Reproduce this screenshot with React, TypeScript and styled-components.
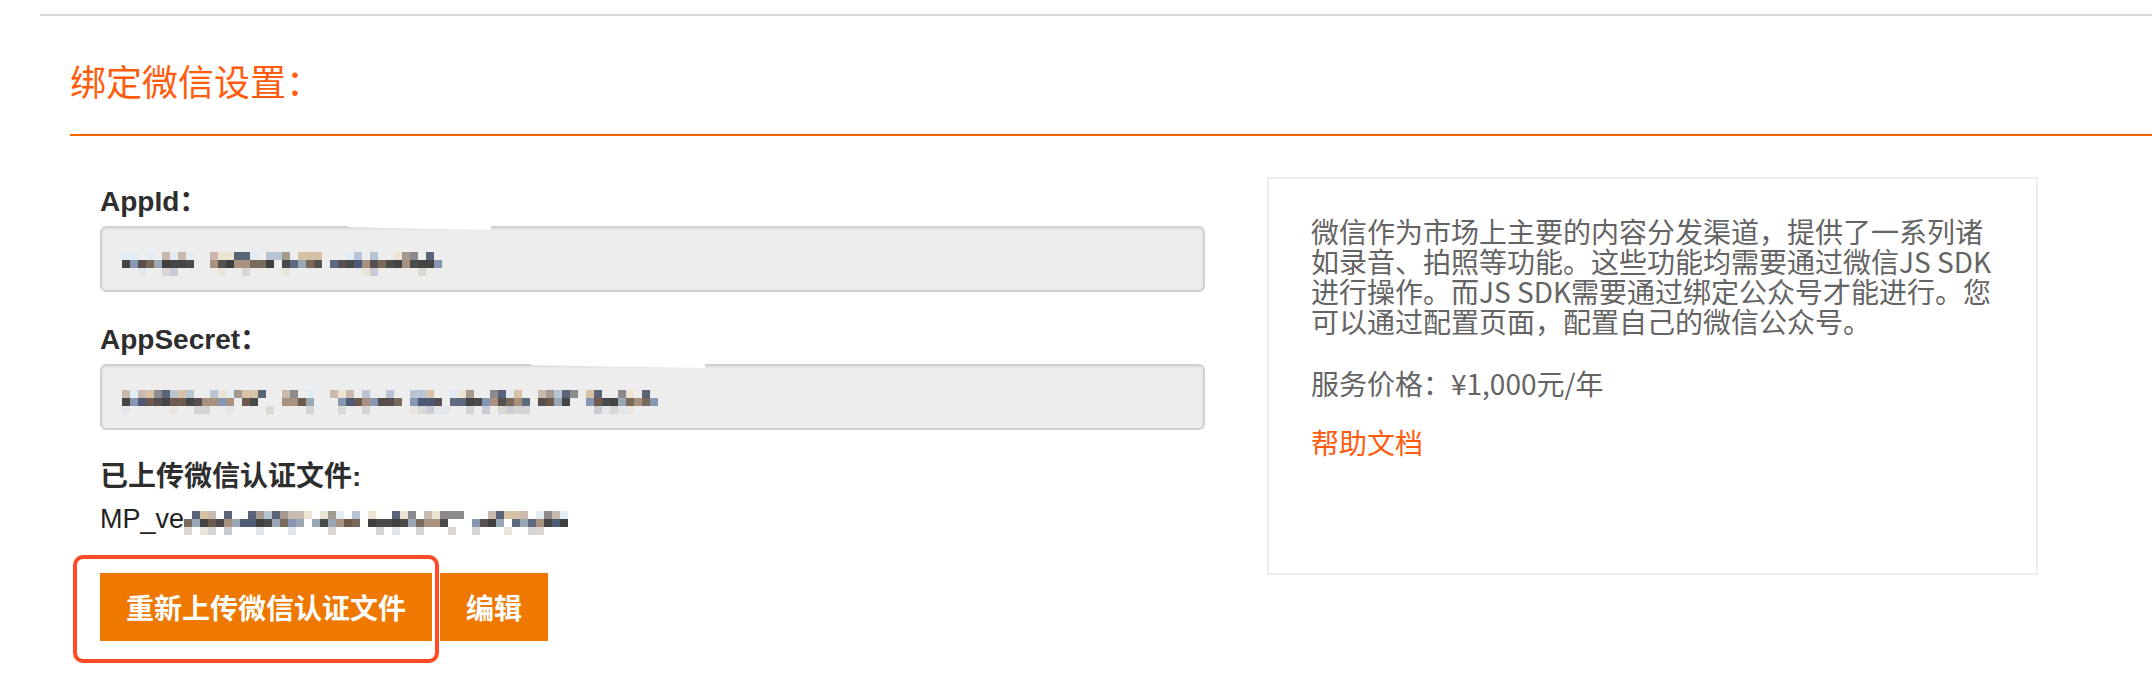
import * as React from "react";
import styled, { createGlobalStyle } from "styled-components";

const GlobalStyle = createGlobalStyle`
  html, body {
    margin: 0;
    padding: 0;
    background: #fff;
  }
  body {
    font-family: "Noto Sans CJK SC", "Liberation Sans", sans-serif;
    color: #333;
  }
`;

const Page = styled.div`
  min-height: 700px;
  box-sizing: border-box;
  padding: 14px 0 0 40px;
`;

const TopRule = styled.div`
  height: 2px;
  background: #d9d9d9;
`;

const Section = styled.section`
  margin-left: 30px;
`;

const Heading = styled.h2`
  margin: 0;
  padding: 42px 0 32px;
  border-bottom: 2px solid #ff6300;
  font-size: 36px;
  line-height: 44px;
  font-weight: 400;
  color: #ff5c0e;
`;

const Body = styled.div`
  display: flex;
  align-items: flex-start;
  gap: 62px;
  padding-left: 30px;
  margin-top: 41px;
`;

const Form = styled.div`
  width: 1105px;
  padding-top: 7px;
`;

const Label = styled.div<{ $top?: number }>`
  margin: ${(p) => p.$top ?? 0}px 0 6px;
  font-family: "Liberation Sans", "Noto Sans CJK SC", sans-serif;
  font-size: 28px;
  line-height: 36px;
  font-weight: 700;
  color: #2e2e2e;
`;

const Field = styled.div`
  position: relative;
  box-sizing: border-box;
  height: 66px;
  padding: 24px 0 0 20px;
  background: #ededed;
  border: 2px solid #d0d0d0;
  border-radius: 6px;
  box-shadow: inset 0 1px 3px rgba(0, 0, 0, 0.08);
`;

// white wedge left over the top border by the screenshot's masking
const Smudge = styled.span<{ $left: number; $width: number }>`
  position: absolute;
  top: -3px;
  left: ${(p) => p.$left}px;
  width: ${(p) => p.$width}px;
  height: 5px;
  background: #fff;
  clip-path: polygon(0 0, 100% 0, 100% 100%, 0 45%);
`;

const Mosaic = styled.div<{ $cols: number }>`
  display: grid;
  grid-template-columns: repeat(${(p) => p.$cols}, 8px);
  grid-auto-rows: 8px;
`;

const Cell = styled.span<{ $c: string }>`
  background: ${(p) => p.$c};
`;

const FileLine = styled.div`
  display: flex;
  align-items: flex-start;
  height: 36px;
  margin-top: 5px;
`;

const FileName = styled.span`
  font-family: "Liberation Sans", sans-serif;
  font-size: 27px;
  line-height: 36px;
  color: #222;
`;

const FileMosaic = styled.div`
  margin-top: 10px;
`;

const ButtonRow = styled.div`
  position: relative;
  display: flex;
  gap: 8px;
  margin-top: 36px;
`;

const Button = styled.button`
  height: 68px;
  padding: 0 26px;
  border: none;
  background: #ef7800;
  color: #fff;
  font-family: "Noto Sans CJK SC", sans-serif;
  font-size: 28px;
  line-height: 68px;
  font-weight: 700;
  cursor: pointer;
`;

const RedMark = styled.div`
  position: absolute;
  left: -27px;
  top: -18px;
  width: 366px;
  height: 108px;
  box-sizing: border-box;
  border: 4px solid #ff4a26;
  border-radius: 10px;
  pointer-events: none;
`;

const Panel = styled.aside`
  box-sizing: border-box;
  width: 771px;
  height: 398px;
  padding: 37px 42px 0;
  border: 2px solid #ececec;
`;

const Para = styled.p<{ $top?: number }>`
  margin: ${(p) => p.$top ?? 0}px 0 0;
  font-size: 28px;
  line-height: 30px;
  color: #646464;
  white-space: nowrap;
`;

const HelpLink = styled.a`
  display: block;
  margin-top: 29px;
  font-size: 28px;
  line-height: 30px;
  color: #ff5c0e;
  text-decoration: none;
`;

const LIGHT = ["#c9b9ae", "#8d8a8d", "#ece4d2", "#d8c2a6", "#e2edf3", "#b7c4d4", "#a59a90", "#5a6478"];
const DARK = ["#4b4b4b", "#585050", "#6e5a4e", "#4e5a76", "#a8917f", "#8797b3", "#7a6a5c", "#5d6a80", "#9aa7b4", "#454545", "#3f3f3f"];
const FAINT = ["#d5d5d5", "#e3e7ec", "#dcd8d4", "#e9e4dc", "#c8ccd2"];

function rng(seed: number) {
  let a = seed;
  return () => {
    a = (a + 0x6d2b79f5) | 0;
    let t = Math.imul(a ^ (a >>> 15), 1 | a);
    t = (t + Math.imul(t ^ (t >>> 7), 61 | t)) ^ t;
    return ((t ^ (t >>> 14)) >>> 0) / 4294967296;
  };
}

function mosaic(cols: number, seed: number): string[] {
  const next = rng(seed);
  const pick = (list: string[]) => list[Math.floor(next() * list.length)];
  const top: string[] = [];
  const mid: string[] = [];
  const bot: string[] = [];
  for (let i = 0; i < cols; i++) {
    const gap = next() < 0.08;
    top.push(!gap && next() < 0.62 ? pick(LIGHT) : "transparent");
    mid.push(!gap && next() < 0.9 ? pick(DARK) : "transparent");
    bot.push(!gap && next() < 0.3 ? pick(FAINT) : "transparent");
  }
  return [...top, ...mid, ...bot];
}

const appIdCells = mosaic(40, 11);
const secretCells = mosaic(68, 27);
const fileCells = mosaic(48, 5);

function Blur({ cols, cells }: { cols: number; cells: string[] }) {
  return (
    <Mosaic $cols={cols}>
      {cells.map((c, i) => (
        <Cell key={i} $c={c} />
      ))}
    </Mosaic>
  );
}

export default function App() {
  return (
    <Page>
      <GlobalStyle />
      <TopRule />
      <Section>
        <Heading>绑定微信设置：</Heading>
        <Body>
          <Form>
            <Label>AppId：</Label>
            <Field>
              <Smudge $left={246} $width={143} />
              <Blur cols={40} cells={appIdCells} />
            </Field>

            <Label $top={30}>AppSecret：</Label>
            <Field>
              <Smudge $left={429} $width={174} />
              <Blur cols={68} cells={secretCells} />
            </Field>

            <Label $top={29}>已上传微信认证文件:</Label>
            <FileLine>
              <FileName>MP_ve</FileName>
              <FileMosaic>
                <Blur cols={48} cells={fileCells} />
              </FileMosaic>
            </FileLine>

            <ButtonRow>
              <Button>重新上传微信认证文件</Button>
              <Button>编辑</Button>
              <RedMark />
            </ButtonRow>
          </Form>

          <Panel>
            <Para>
              微信作为市场上主要的内容分发渠道，提供了一系列诸
              <br />
              如录音、拍照等功能。这些功能均需要通过微信JS SDK
              <br />
              进行操作。而JS SDK需要通过绑定公众号才能进行。您
              <br />
              可以通过配置页面，配置自己的微信公众号。
            </Para>
            <Para $top={32}>服务价格：¥1,000元/年</Para>
            <HelpLink href="#">帮助文档</HelpLink>
          </Panel>
        </Body>
      </Section>
    </Page>
  );
}
